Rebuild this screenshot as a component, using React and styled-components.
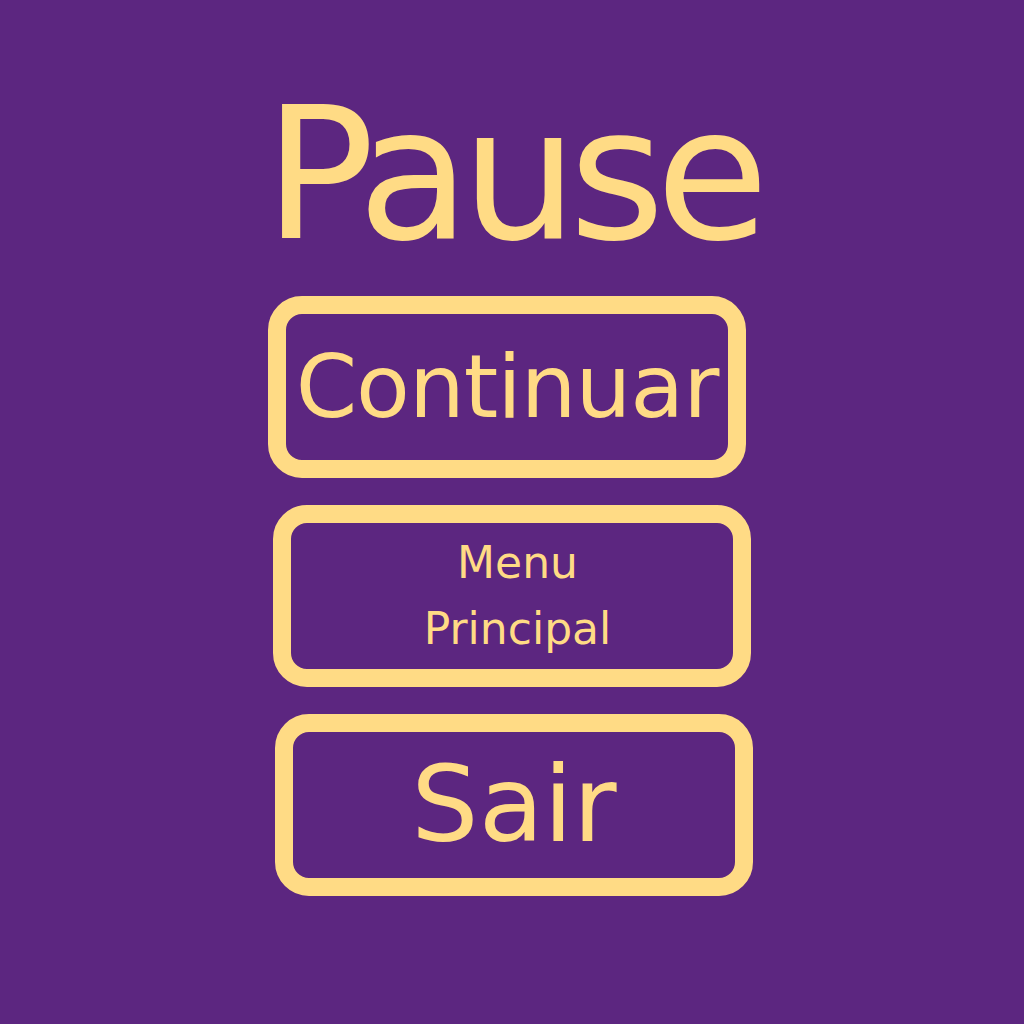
import React from "react";
import { styled, createGlobalStyle } from "styled-components";

const GlobalStyle = createGlobalStyle`
  html, body {
    margin: 0;
    padding: 0;
    background-color: #5c2680;
  }
`;

const FONT = `"Comic Sans MS", "DejaVu Sans", sans-serif`;

const Screen = styled.div`
  width: 1024px;
  height: 1024px;
  background-color: #5c2680;
  display: flex;
  flex-direction: column;
  align-items: center;
  box-sizing: border-box;
  padding-top: 76px;
  font-family: ${FONT};
  color: #ffdb85;
`;

const Title = styled.h1`
  margin: 0 0 24px 0;
  font-family: ${FONT};
  font-weight: 400;
  font-size: 184px;
  line-height: 196px;
  letter-spacing: -9px;
  color: #ffdb85;
`;

const Menu = styled.div`
  display: flex;
  flex-direction: column;
  align-items: center;
  gap: 27px;
`;

const MenuBtn = styled.button`
  width: 478px;
  height: 182px;
  box-sizing: border-box;
  margin-left: ${(props) => props.$shift || 0}px;
  border: 18px solid #ffdb85;
  border-radius: 34px;
  background: transparent;
  color: #ffdb85;
  font-family: ${FONT};
  font-size: ${(props) => props.$size}px;
  line-height: ${(props) => props.$lh || 1.2};
  letter-spacing: ${(props) => props.$ls || 0}px;
  display: flex;
  align-items: center;
  justify-content: center;
  text-align: center;
  padding: 0 0 0 ${(props) => props.$pad || 0}px;
  cursor: pointer;
`;

function App() {
  return (
    <>
      <GlobalStyle />
      <Screen>
        <Title>Pause</Title>
        <Menu>
          <MenuBtn $size={88} $ls={-1} $shift={-10}>
            Continuar
          </MenuBtn>
          <MenuBtn $size={44} $lh={1.5} $shift={-1} $pad={12}>
            Menu
            <br />
            Principal
          </MenuBtn>
          <MenuBtn $size={106} $shift={4}>
            Sair
          </MenuBtn>
        </Menu>
      </Screen>
    </>
  );
}

export default App;
